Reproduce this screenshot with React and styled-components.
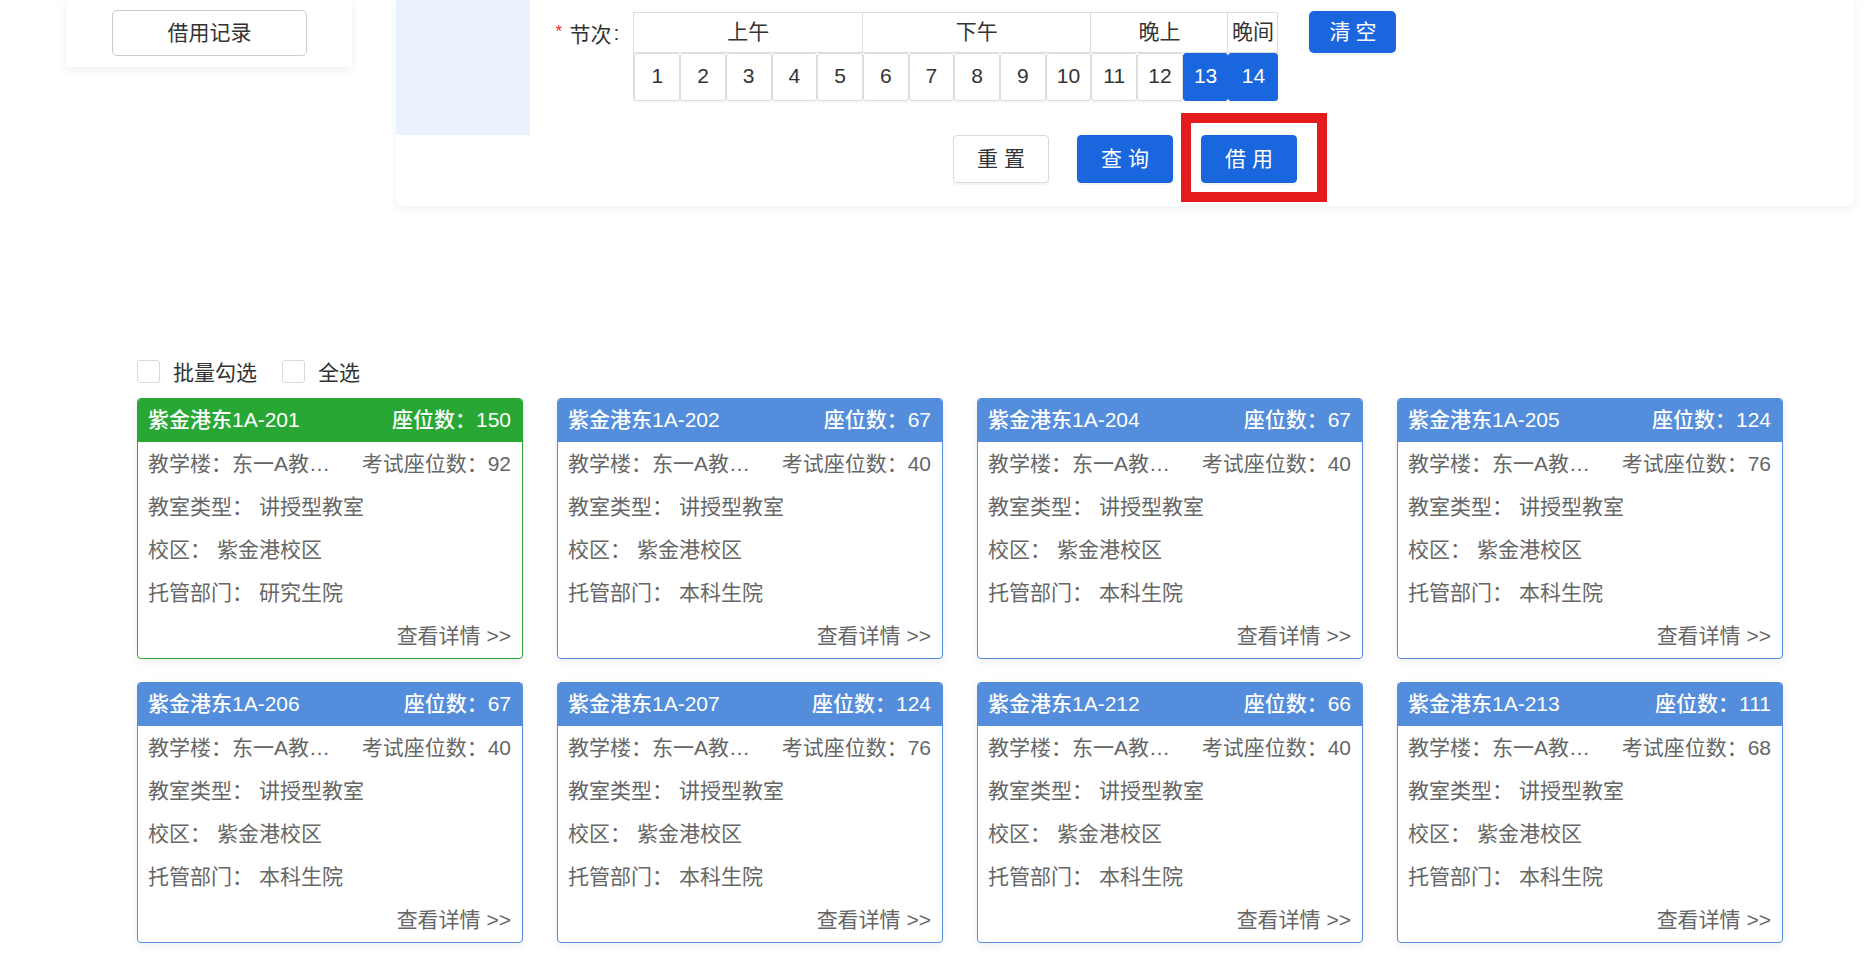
import React from 'react'
import styled, { createGlobalStyle } from 'styled-components'

const GlobalStyle = createGlobalStyle`
  * { box-sizing: border-box; }
  body {
    margin: 0;
    background: #fff;
    color: #333;
    font-family: "Liberation Sans", "Noto Sans CJK SC", sans-serif;
  }
  button { font-family: inherit; }
`

const BLUE = '#1a66df'

const Page = styled.div`
  width: 1875px;
  min-height: 955px;
  overflow: hidden;
`

const TopRow = styled.div`
  display: flex;
  align-items: flex-start;
  gap: 44px;
  padding-left: 67px;
`

const RecordPanel = styled.div`
  width: 285px;
  height: 67px;
  background: #fff;
  box-shadow: 0 3px 10px rgba(0, 0, 0, 0.07);
  display: flex;
  justify-content: center;
  padding-top: 10px;
`

const OutlineButton = styled.button`
  width: 195px;
  height: 46px;
  border: 1px solid #ccc;
  border-radius: 5px;
  background: #fff;
  color: #333;
  font-size: 21px;
  padding-bottom: 5px;
`

const SearchCard = styled.div`
  width: 1458px;
  height: 206px;
  background: #fff;
  border-radius: 0 0 6px 6px;
  box-shadow: 0 3px 10px rgba(0, 0, 0, 0.06);
`

const FormTop = styled.div`
  display: flex;
  height: 135px;
`

const SideBlock = styled.div`
  width: 134px;
  background: #eaf2fe;
`

const Fields = styled.div`
  display: flex;
  align-items: flex-start;
  padding: 12px 0 0 24px;
`

const Label = styled.div`
  display: flex;
  align-items: center;
  height: 42px;
  font-size: 21px;
  color: #333;
  margin-right: 14px;
`

const Star = styled.span`
  color: #f5222d;
  font-size: 16px;
  margin-right: 6px;
  font-family: "Liberation Mono", monospace;
`

const Colon = styled.span`
  margin-left: 2px;
`

const Periods = styled.div`
  width: 645px;
  display: grid;
  grid-template-columns: repeat(13, 1fr) 50px;
  border-top: 1px solid #ddd;
  border-left: 1px solid #ddd;
`

const HeadCell = styled.div`
  grid-column: span ${p => p.$span};
  height: 40px;
  border-right: 1px solid #ddd;
  border-bottom: 1px solid #ddd;
  display: flex;
  align-items: center;
  justify-content: center;
  padding-bottom: 6px;
  font-size: 21px;
  color: #333;
  white-space: nowrap;
`

const Slot = styled.div`
  height: 48px;
  border: 1px solid ${p => (p.$on ? BLUE : '#dcdcdc')};
  border-radius: 3px;
  background: ${p => (p.$on ? BLUE : '#fff')};
  color: ${p => (p.$on ? '#fff' : '#333')};
  box-shadow: 0 2px 0 rgba(0, 0, 0, 0.03);
  display: flex;
  align-items: center;
  justify-content: center;
  padding-bottom: 2px;
  font-size: 21px;
`

const ClearButton = styled.button`
  margin: -1px 0 0 31px;
  width: 87px;
  height: 42px;
  border: none;
  border-radius: 5px;
  background: ${BLUE};
  color: #fff;
  font-size: 21px;
  letter-spacing: 5px;
  padding: 0 0 4px 5px;
  box-shadow: 0 2px 0 rgba(0, 0, 0, 0.05);
`

const ActionBar = styled.div`
  display: flex;
  justify-content: center;
  gap: 28px;
`

const ActionButton = styled.button`
  width: 96px;
  height: 48px;
  border-radius: 4px;
  border: 1px solid ${p => (p.$primary ? BLUE : '#d9d9d9')};
  background: ${p => (p.$primary ? BLUE : '#fff')};
  color: ${p => (p.$primary ? '#fff' : '#333')};
  font-size: 21px;
  letter-spacing: 6px;
  padding: 0 0 4px 6px;
  box-shadow: 0 2px 0 rgba(0, 0, 0, 0.04);
`

const Marked = styled.span`
  position: relative;
  display: inline-flex;

  &::after {
    content: '';
    position: absolute;
    top: -22px;
    left: -20px;
    right: -30px;
    bottom: -19px;
    border: 10px solid #e31b1d;
    pointer-events: none;
  }
`

const Lower = styled.div`
  padding: 154px 0 0 137px;
`

const CheckRow = styled.div`
  display: flex;
  align-items: center;
  height: 23px;
  font-size: 21px;
  color: #333;
`

const CheckText = styled.span`
  margin-top: -2px;
`

const Check = styled.span`
  width: 23px;
  height: 23px;
  border: 1px solid #d9d9d9;
  border-radius: 3px;
  margin: 0 13px 0 ${p => p.$gap || 0}px;
`

const RoomGrid = styled.div`
  margin-top: 15px;
  display: grid;
  grid-template-columns: repeat(4, 386px);
  column-gap: 34px;
  row-gap: 23px;
`

const RoomCard = styled.div`
  border: 1px solid ${p => p.$color};
  border-radius: 4px;
  overflow: hidden;
  background: #fff;
  box-shadow: 0 2px 8px rgba(0, 0, 0, 0.08);
`

const RoomHead = styled.div`
  height: 43px;
  background: ${p => p.$color};
  color: #fff;
  display: flex;
  align-items: center;
  justify-content: space-between;
  padding: 0 11px 5px 10px;
  font-size: 21px;
  font-weight: 500;
`

const RoomBody = styled.div`
  padding: 0 11px 0 10px;
  color: #666;
  font-size: 21px;
`

const InfoRow = styled.div`
  height: 43.2px;
  display: flex;
  align-items: center;
  padding-bottom: 4px;
  justify-content: ${p => (p.$end ? 'flex-end' : 'flex-start')};
`

const Clip = styled.span`
  flex: 0 0 186px;
  white-space: nowrap;
  overflow: hidden;
  text-overflow: ellipsis;
`

const Exam = styled.span`
  flex: 1;
  text-align: right;
  white-space: nowrap;
`

const Value = styled.span`
  margin-left: 6px;
`

const rooms = [
  { no: '201', seats: 150, exam: 92, dept: '研究生院', active: true },
  { no: '202', seats: 67, exam: 40, dept: '本科生院' },
  { no: '204', seats: 67, exam: 40, dept: '本科生院' },
  { no: '205', seats: 124, exam: 76, dept: '本科生院' },
  { no: '206', seats: 67, exam: 40, dept: '本科生院' },
  { no: '207', seats: 124, exam: 76, dept: '本科生院' },
  { no: '212', seats: 66, exam: 40, dept: '本科生院' },
  { no: '213', seats: 111, exam: 68, dept: '本科生院' },
]

const heads = [
  { name: '上午', span: 5 },
  { name: '下午', span: 5 },
  { name: '晚上', span: 3 },
  { name: '晚间', span: 1 },
]

const picked = [13, 14]

function Room({ room }) {
  const color = room.active ? '#28a735' : '#538ddb'
  return (
    <RoomCard $color={color}>
      <RoomHead $color={color}>
        <span>紫金港东1A-{room.no}</span>
        <span>座位数：{room.seats}</span>
      </RoomHead>
      <RoomBody>
        <InfoRow>
          <Clip>教学楼：东一A教学楼</Clip>
          <Exam>考试座位数：{room.exam}</Exam>
        </InfoRow>
        <InfoRow>教室类型：<Value>讲授型教室</Value></InfoRow>
        <InfoRow>校区：<Value>紫金港校区</Value></InfoRow>
        <InfoRow>托管部门：<Value>{room.dept}</Value></InfoRow>
        <InfoRow $end>查看详情 &gt;&gt;</InfoRow>
      </RoomBody>
    </RoomCard>
  )
}

export default function App() {
  return (
    <Page>
      <GlobalStyle />
      <TopRow>
        <RecordPanel>
          <OutlineButton>借用记录</OutlineButton>
        </RecordPanel>
        <SearchCard>
          <FormTop>
            <SideBlock />
            <Fields>
              <Label>
                <Star>*</Star>节次<Colon>:</Colon>
              </Label>
              <Periods>
                {heads.map(h => (
                  <HeadCell key={h.name} $span={h.span}>{h.name}</HeadCell>
                ))}
                {Array.from({ length: 14 }, (_, i) => i + 1).map(n => (
                  <Slot key={n} $on={picked.includes(n)}>{n}</Slot>
                ))}
              </Periods>
              <ClearButton>清空</ClearButton>
            </Fields>
          </FormTop>
          <ActionBar>
            <ActionButton>重置</ActionButton>
            <ActionButton $primary>查询</ActionButton>
            <Marked>
              <ActionButton $primary>借用</ActionButton>
            </Marked>
          </ActionBar>
        </SearchCard>
      </TopRow>
      <Lower>
        <CheckRow>
          <Check /><CheckText>批量勾选</CheckText>
          <Check $gap={25} /><CheckText>全选</CheckText>
        </CheckRow>
        <RoomGrid>
          {rooms.map(r => (
            <Room key={r.no} room={r} />
          ))}
        </RoomGrid>
      </Lower>
    </Page>
  )
}
